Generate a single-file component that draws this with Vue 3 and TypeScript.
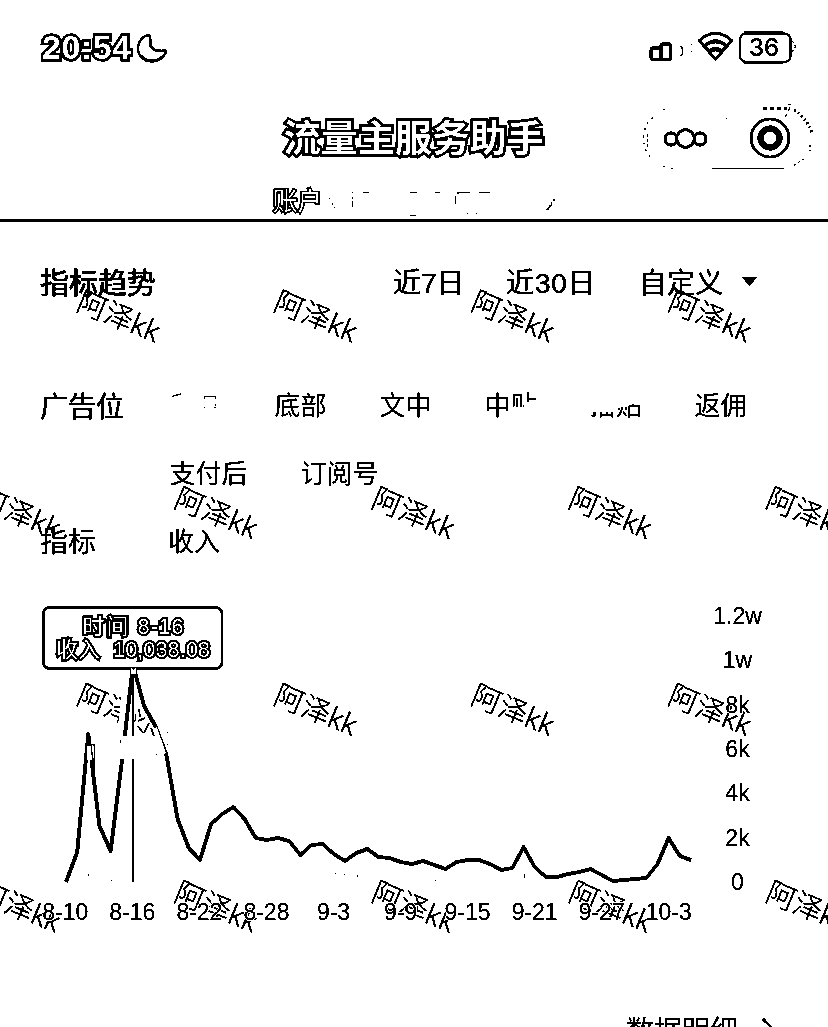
<script setup lang="ts">
interface Point { x: number; y: number }

const values: number[] = [
  882, 852, 734, 826, 851, 762, 665, 706, 726, 755, 819, 848, 860, 824, 814, 807, 819, 838, 840, 838,
  841, 855, 845, 844, 854, 861, 853, 849, 857, 858, 862, 864, 861, 865, 869, 862, 860, 860, 864, 870,
  868, 847, 867, 877, 877, 874, 872, 869, 875, 881, 880, 879, 878, 864, 838, 856, 860,
]
const line: string = values.map((y, i) => `${(66 + i * 11.16).toFixed(1)},${y - 590}`).join(' ')

const days: string[] = ['8-10', '8-16', '8-22', '8-28', '9-3', '9-9', '9-15', '9-21', '9-27', '10-3']
const ticks: string[] = ['1.2w', '1w', '8k', '6k', '4k', '2k', '0']

const marks: Point[] = []
for (let row = 0; row < 4; row++) {
  const start = row % 2 ? -24.5 : 75
  for (let x = start; x < 828; x += 197.1) marks.push({ x, y: 309.5 + row * 196.8 })
}
</script>

<template>
  <div class="page">
    <svg class="defs" width="0" height="0">
      <filter id="ink" x="0" y="0" width="100%" height="100%" color-interpolation-filters="sRGB">
        <feColorMatrix type="saturate" values="0" />
        <feComponentTransfer>
          <feFuncR type="discrete" tableValues="0 0 1" />
          <feFuncG type="discrete" tableValues="0 0 1" />
          <feFuncB type="discrete" tableValues="0 0 1" />
        </feComponentTransfer>
      </filter>
    </svg>

    <svg class="watermarks" width="828" height="1027" viewBox="0 0 828 1027">
      <text v-for="(m, i) in marks" :key="i" :transform="`translate(${m.x} ${m.y}) rotate(22.500)`">阿泽kk</text>
    </svg>

    <header class="header">
      <div class="status">
        <span class="clock outlined">20:54</span>
        <svg class="moon" width="32" height="32" viewBox="0 0 32 32">
          <path d="M13 3C6 4 2 10 2 16C2 24 8 29 16 29C23 29 28 25 30 20C30 18 28 18 26 19H24C18 19 15 16 14 12V4Z" fill="#fff" stroke="#000" stroke-width="2.200" />
          <path d="M14.500 7V14L18 18H25" fill="none" stroke="#000" stroke-width="2.600" />
          <path d="M5 24Q9 29 16 29Q22 29 26 25" fill="none" stroke="#000" stroke-width="3" />
        </svg>
        <svg class="radios" width="152" height="36" viewBox="0 0 152 36">
          <g fill="#fff" stroke="#000" stroke-width="2.800">
            <rect x="6" y="18" width="9.500" height="11.500" rx="2" />
            <rect x="16" y="14" width="9.500" height="15.500" rx="1.500" />
          </g>
          <path d="M36 16L37.500 19V24L36 26M46.500 14v1M46.500 21v1" fill="none" stroke="#000" stroke-width="1.500" />
          <g fill="#fff" stroke="#000" stroke-width="2.600">
            <path d="M54.500 10.500C64 1 77 1 86.500 10.500L82 16C75 9 66 9 59 16Z" />
            <path d="M59.500 16.500C66 10.500 75 10.500 81.500 16.500L77 21C72 17 69 17 64 21Z" />
            <path d="M64.500 23C68 19 73 19 76.500 23L70.500 29Z" />
          </g>
          <rect x="95" y="3.500" width="50.500" height="28.500" rx="6" fill="#fff" stroke="#000" stroke-width="2" />
          <path d="M99 2.500H138M99 32.500H138" stroke="#000" stroke-width="2.200" />
          <path d="M147 11Q151 14 150 18L147 22" fill="none" stroke="#000" stroke-dasharray="3 2" />
          <text x="119" y="25.500" class="battery">36</text>
        </svg>
      </div>

      <div class="nav">
        <h1 class="title outlined">流量主服务助手</h1>
        <svg class="capsule" width="176" height="70" viewBox="0 0 176 70">
          <g fill="none" stroke="#000">
            <path d="M10 54Q2 44 4 30Q6 18 14 14" stroke-width="1.100" stroke-dasharray="2 5" />
            <path d="M7.500 31V44" stroke-width="1" stroke-dasharray="3 2" />
            <path d="M72 65.500H144" stroke-width="1" />
            <path d="M23 6.500h2M86 15.500h1M23 63.500h2M31 65.500h2" />
            <path d="M123 5.500H147" stroke-width="2.500" stroke-dasharray="4 3" />
            <path d="M148 1.500h3M150 4L144 17" stroke-dasharray="4 3" />
            <path d="M154 7Q166 14 172 30" stroke-width="3" stroke-dasharray="2 3 1 3" />
            <path d="M170 42V48M164 56L153 63" stroke-dasharray="2 3" />
          </g>
          <g fill="#fff" stroke="#000" stroke-width="2.800">
            <circle cx="31" cy="36" r="6" />
            <circle cx="60" cy="36" r="6" />
            <circle cx="45.500" cy="35.500" r="8.800" />
          </g>
          <circle cx="130" cy="35" r="19" fill="#fff" stroke="#000" stroke-width="2.600" />
          <circle cx="130" cy="35" r="9.500" fill="#fff" stroke="#000" stroke-width="6" />
        </svg>
      </div>

      <div class="account">
        <span class="account-name outlined">账户</span>
        <svg width="240" height="34" viewBox="0 0 240 34">
          <g fill="none" stroke="#000">
            <path d="M7.500 13v1M10.500 18v2M12.500 22v1M30.500 7v1M30.500 12v2M30.500 16v6M41 7.500h6M88 7.500h7M113 7.500h5M88 30.500h6M145.500 28v1M154.500 28v1" />
            <path d="M133.500 11V19M135 8.500L137 7.500H148M157 7.500H168" stroke-width="1.300" />
            <path d="M225 25L229 20" stroke-width="1.800" />
            <path d="M229.500 17V20M231 15h2" />
            <path d="M15 34.500H54M95 34.500H153M203 34.500h5M214 34.500h10" stroke-dasharray="6 1 3 2" />
          </g>
        </svg>
      </div>
    </header>

    <main>
      <section class="tabs">
        <h2>指标趋势</h2>
        <span class="tab">近7日</span>
        <span class="tab month">近30日</span>
        <span class="tab custom">自定义</span>
        <svg class="caret" width="16" height="12" viewBox="0 0 16 12"><path d="M0 2H15L7.500 11.500Z" /></svg>
      </section>

      <section class="filters">
        <span class="label bold">广告位</span>
        <div class="options">
          <svg class="faded" width="52" height="36" viewBox="0 0 52 36">
            <path d="M2 8.500L5 7.500L11 6M34 8.500H45M34.500 8v3M45.500 8v3M34 19.500h1M44 19.500h2M45.500 16v2" fill="none" stroke="#000" stroke-width="1.200" />
          </svg>
          <span>底部</span>
          <span>文中</span>
          <span class="fade-low">中贴</span>
          <span class="fade-high">插贴</span>
          <span>返佣</span>
        </div>
        <div class="options second">
          <span>支付后</span>
          <span>订阅号</span>
        </div>
        <span class="label">指标</span>
        <div class="options metric"><span>收入</span></div>
      </section>

      <svg class="chart" width="828" height="350" viewBox="0 0 828 350">
        <polyline :points="line" fill="none" stroke="#fff" stroke-width="16" stroke-linejoin="round" />
        <path d="M136 100L170 140V168H136Z" fill="#fff" />
        <polyline :points="line" fill="none" stroke="#000" stroke-width="3.600" stroke-linejoin="round" />
        <path d="M133 76V292" stroke="#000" stroke-width="2" />
        <path d="M116 146H138L157 137L166 163L155 169H116ZM86.500 156H91L92 170H87Z" fill="#fff" />
        <path d="M94.500 154V183M92 154.500h3M120.500 150v3" fill="none" stroke="#000" stroke-width="1.600" />
        <path d="M88.500 284v2M111.500 290v1M335.500 283v1M344.500 284v1M357.500 285v2M435.500 290v1M524.500 284v4M167.500 142v1M167.500 154v1M156.500 164v1" stroke="#000" />
        <path d="M139 119L140 127M138 131L145 128M138 136L143 143M149 133L144 143M151 138L154 146" fill="none" stroke="#000" stroke-width="1.500" />
        <g class="axis">
          <text v-for="(d, i) in days" :key="d" :x="65.300 + i * 67.050" y="330">{{ d }}</text>
          <text v-for="(t, i) in ticks" :key="t" x="737.500" :y="34 + i * 44.300">{{ t }}</text>
        </g>
        <rect x="43.500" y="17.500" width="178.500" height="61" rx="6" fill="#fff" stroke="#000" stroke-width="2.600" />
        <path d="M131 77L133.500 80L136 77V84H131Z" fill="#fff" />
        <g class="tip">
          <text x="82.500" y="43.500" textLength="46">时间</text>
          <text x="137.500" y="44" textLength="46">8-16</text>
          <text x="56" y="66.500">收入</text>
          <text x="113" y="66.500" textLength="97">10,038.08</text>
        </g>
      </svg>

      <section class="detail">
        <span>数据明细</span>
        <svg width="14" height="24" viewBox="0 0 14 24"><path d="M1 2L12 13L1 24" fill="none" stroke="#000" stroke-width="2.500" /></svg>
      </section>
    </main>
  </div>
</template>

<style>
body { margin: 0; background: #fff; }
</style>

<style scoped>
.page {
  position: relative;
  width: 828px;
  height: 1027px;
  overflow: hidden;
  background: #fff;
  color: #000;
  font-family: "Liberation Sans", "Noto Sans CJK SC", sans-serif;
  filter: url(#ink);
}
.defs { position: absolute; }
svg { display: block; flex: none; }
h1, h2 { margin: 0; }
main { position: relative; }
.header {
  box-sizing: border-box;
  height: 222px;
  border-bottom: 3px solid #000;
  overflow: hidden;
}
.outlined {
  color: #fff;
  -webkit-text-stroke: 5px #000;
  paint-order: stroke fill;
}
.status {
  display: flex;
  align-items: center;
  height: 66px;
  padding: 15px 31px 0 42px;
}
.clock { width: 94px; font-size: 34px; font-weight: 700; line-height: 64px; height: 66px; white-space: nowrap; letter-spacing: .5px; }
.radios { margin-left: auto; }
.battery { font-family: Inter, sans-serif; font-size: 24px; font-weight: 500; text-anchor: middle; }
.nav {
  display: flex;
  align-items: center;
  height: 104px;
  box-sizing: border-box;
  padding: 10px 12px 0 283.500px;
}
.title { font-size: 37.200px; font-weight: 700; line-height: 60px; padding-top: 2px; white-space: nowrap; }
.capsule { margin-left: auto; }
.account { display: flex; height: 36px; padding-left: 273px; }
.account-name { width: 49px; font-size: 24.500px; line-height: 33px; -webkit-text-stroke-width: 3px; }
.tabs {
  display: flex;
  align-items: center;
  height: 117px;
  padding: 0 0 3px 40px;
  font-size: 28px;
}
.tabs h2 {
  width: 353px;
  font-size: 29px;
  font-weight: 400;
  -webkit-text-stroke: .7px #000;
}
.tab { width: 113px; -webkit-text-stroke: .2px #000; white-space: nowrap; }
.month { width: 133px; letter-spacing: .9px; }
.custom { width: 103px; }
.filters {
  display: grid;
  grid-template-columns: 129.500px 1fr;
  grid-template-rows: 68px 67px 69px;
  align-items: center;
  padding: 30px 0 0 40px;
  font-size: 26px;
}
.label { font-size: 28px; padding-bottom: 3px; -webkit-text-stroke: .1px #000; }
.bold { -webkit-text-stroke-width: .3px; }
.options { display: flex; gap: 53px; line-height: 36px; }
.second { grid-column: 2; }
.metric { margin-left: -1.5px; }
.fade-low { clip-path: polygon(0 0, 100% 0, 100% 36%, 76% 42%, 76% 52%, 50% 52%, 50% 100%, 0 100%); }
.fade-high { clip-path: polygon(0 66%, 45% 66%, 45% 56%, 75% 52%, 75% 46%, 100% 46%, 100% 100%, 0 100%); }
.chart { margin-top: 14px; }
.axis {
  font-size: 23px;
  text-anchor: middle;
  stroke: #fff;
  stroke-width: 2px;
  paint-order: stroke fill;
}
.tip {
  font-size: 22px;
  fill: #fff;
  stroke: #000;
  stroke-width: 3.800px;
  paint-order: stroke fill;
}
.detail { display: flex; align-items: center; gap: 24px; height: 40px; padding: 69px 0 0 626px; font-size: 28px; }
.watermarks { position: absolute; left: 0; top: 0; pointer-events: none; font-size: 29px; }
.watermarks text { font-family: Roboto, "Noto Sans CJK SC", sans-serif; font-weight: 300; stroke: #000; stroke-width: .2px; }
</style>
